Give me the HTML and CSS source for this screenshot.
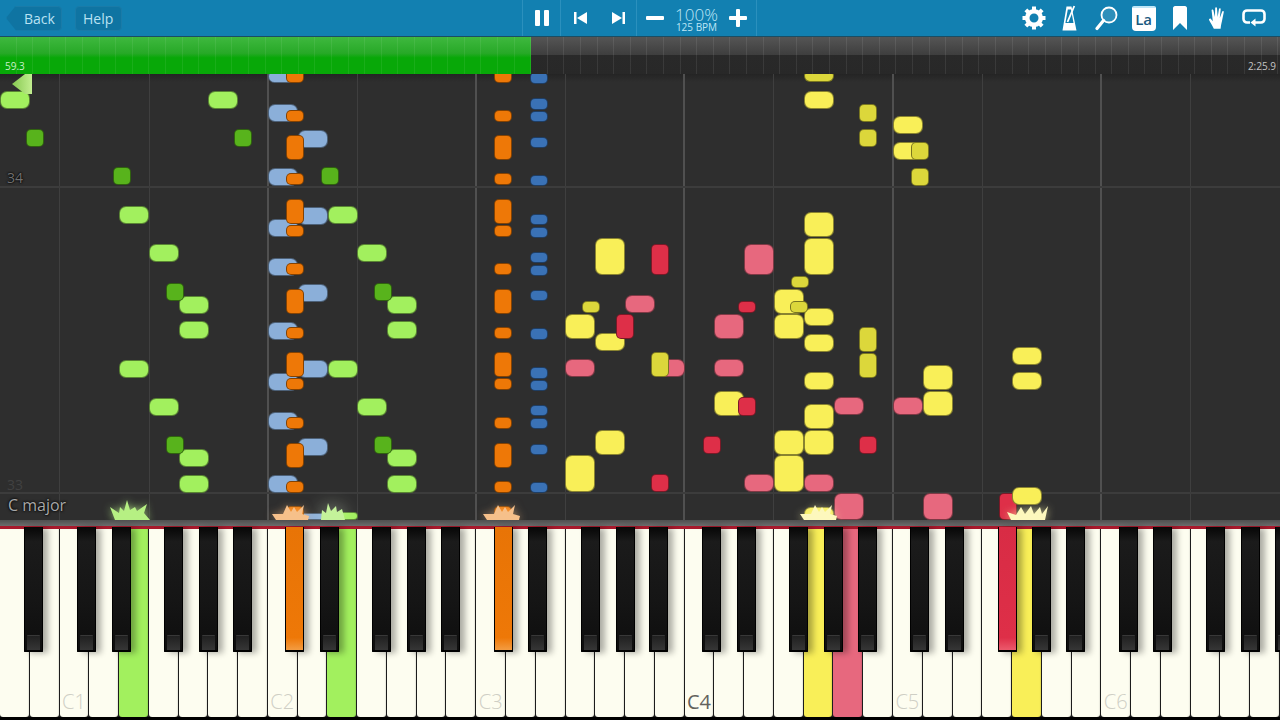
FILE: index.html
```html
<!DOCTYPE html>
<html lang="en">
<head>
    <meta charset="UTF-8">
    <title>Synthesia</title>
    <link rel="stylesheet" href="styles.css">
</head>
<body>
    <header class="topbar">
        <div class="nav">
            <button class="nav-btn back">Back</button>
            <button class="nav-btn">Help</button>
        </div>
        <div class="transport">
            <div class="cell pause-cell">
                <svg class="icon" width="16" height="18" viewBox="0 0 16 18"><rect x="1" y="1" width="5" height="16" rx="1"/><rect x="10" y="1" width="5" height="16" rx="1"/></svg>
            </div>
            <div class="cell skip-cell">
                <svg class="icon" width="14" height="14" viewBox="0 0 14 14"><rect x="0" y="1" width="2.5" height="12"/><path d="M13 1v12L3 7z"/></svg>
                <svg class="icon" width="14" height="14" viewBox="0 0 14 14"><rect x="11.5" y="1" width="2.500" height="12"/><path d="M1 1v12l10-6z"/></svg>
            </div>
            <div class="cell speed-cell">
                <svg class="icon" width="18" height="18" viewBox="0 0 18 18"><rect x="0" y="7" width="18" height="4" rx="1"/></svg>
                <div class="speed">
                    <span class="percent">100%</span>
                    <span class="bpm">125 BPM</span>
                </div>
                <svg class="icon" width="18" height="18" viewBox="0 0 18 18"><rect x="0" y="7" width="18" height="4" rx="1"/><rect x="7" y="0" width="4" height="18" rx="1"/></svg>
            </div>
        </div>
        <div class="tools">
            <div class="tool">
                <svg class="icon" width="24" height="24" viewBox="0 0 24 24">
                    <circle cx="12" cy="12" r="6.800" fill="none" stroke="#fff" stroke-width="4.600"/>
                    <rect x="10" y="0.500" width="4" height="5"/>
                    <rect x="10" y="0.500" width="4" height="5" transform="rotate(45 12 12)"/>
                    <rect x="10" y="0.500" width="4" height="5" transform="rotate(90 12 12)"/>
                    <rect x="10" y="0.500" width="4" height="5" transform="rotate(135 12 12)"/>
                    <rect x="10" y="0.500" width="4" height="5" transform="rotate(180 12 12)"/>
                    <rect x="10" y="0.500" width="4" height="5" transform="rotate(225 12 12)"/>
                    <rect x="10" y="0.500" width="4" height="5" transform="rotate(270 12 12)"/>
                    <rect x="10" y="0.500" width="4" height="5" transform="rotate(315 12 12)"/>
                </svg>
            </div>
            <div class="tool">
                <svg class="icon" width="16" height="26" viewBox="0 0 16 26">
                    <path fill-rule="evenodd" d="M4.500 1.500H9.500L14.500 25.500H.5zM5.800 4.500L3.400 18H11.500L9 4.500z"/>
                    <path d="M5.500 17L12.300 1" fill="none" stroke="#fff" stroke-width="1.800"/>
                </svg>
            </div>
            <div class="tool">
                <svg class="icon" width="23" height="25" viewBox="0 0 23 25">
                    <circle cx="14" cy="9" r="7.500" fill="#fff" fill-opacity="0.12" stroke="#fff" stroke-width="1.800"/>
                    <path d="M8.500 14.500L2 22.500" fill="none" stroke="#fff" stroke-width="3.200" stroke-linecap="round"/>
                </svg>
            </div>
            <div class="tool">
                <div class="lang-btn">La</div>
            </div>
            <div class="tool">
                <svg class="icon" width="14" height="24" viewBox="0 0 14 24"><path d="M2 0h10c1 0 2 1 2 2v22l-7-7-7 7V2C0 1 1 0 2 0z"/></svg>
            </div>
            <div class="tool">
                <svg class="icon" width="18" height="24" viewBox="0 0 20 26"><path d="M6.500 25c-1.500-3-3-5.500-5.200-9.500-.7-1.300 1-2.500 2-1.400l2 2.500L4 4.500c-.1-1.300 1.700-1.500 2-.2l1.700 7.700L8 2c0-1.400 1.900-1.400 2 0l.7 10 1.500-9c.3-1.300 2-1 1.900.3l-1 9.700 2.600-7c.5-1.200 2.100-.6 1.800.7l-2 10c-.4 2-1 3.500-1.500 8.300z"/></svg>
            </div>
            <div class="tool">
                <svg class="icon" width="24" height="20" viewBox="0 0 24 20">
                    <path d="M8 14.500H5a3.500 3.500 0 0 1-3.500-3.500V6A3.500 3.500 0 0 1 5 2.500H19A3.500 3.500 0 0 1 22.500 6V11A3.500 3.500 0 0 1 19 14.500H12" fill="none" stroke="#fff" stroke-width="2.600"/>
                    <path d="M13.500 10.500L8.500 14.500 13.500 18.500z"/>
                </svg>
            </div>
        </div>
    </header>

    <div class="timeline">
        <div class="played"></div>
        <span class="time-left">59.3</span>
        <span class="time-right">2:25.9</span>
    </div>

    <main class="roll" id="roll">
        <span class="measure m34">34</span>
        <span class="measure m33">33</span>
        <span class="key-sig">C major</span>
        <svg class="marker" width="22" height="21" viewBox="0 0 22 21">
            <defs>
                <linearGradient id="marker-fill" x1="0" x2="1" y1="0" y2="0">
                    <stop offset="0" stop-color="#86c850"/>
                    <stop offset="1" stop-color="#c2ee90"/>
                </linearGradient>
            </defs>
            <path d="M1 10L14 0h7v20h-7z" fill="url(#marker-fill)"/>
        </svg>
    </main>

    <div class="divider"></div>
    <div class="keyboard" id="keyboard"></div>

    <script src="script.js"></script>
</body>
</html>
```

FILE: styles.css
```css
* {
    box-sizing: border-box;
}

html, body {
    margin: 0;
    height: 720px;
    overflow: hidden;
}

body {
    display: flex;
    flex-direction: column;
    width: 1280px;
    background: #000;
    font-family: "Open Sans", "Noto Sans", sans-serif;
}

/* top bar */
.topbar {
    display: flex;
    align-items: center;
    height: 36px;
    flex: none;
    background: #1280b1;
}

.icon {
    fill: #fff;
    display: block;
    flex: none;
}

.nav {
    display: flex;
    gap: 13px;
    padding-left: 6px;
    width: 522px;
}

.nav-btn {
    height: 25px;
    padding: 0 8px 0 7px;
    border: 1px solid #1a7ba8;
    border-radius: 4px;
    background: #0f74a2;
    color: #b9e2f3;
    font-family: inherit;
    font-size: 14px;
}

.back {
    width: 56px;
    padding-left: 17px;
    padding-right: 0;
    text-align: left;
    clip-path: polygon(10px 0, 100% 0, 100% 100%, 10px 100%, 0 50%);
}

.transport {
    display: flex;
    height: 36px;
}

.cell {
    display: flex;
    align-items: center;
    border-left: 1px solid #2b90bd;
}

.pause-cell {
    width: 38px;
    justify-content: center;
}

.skip-cell {
    width: 76px;
    padding: 0 11px 0 13px;
    justify-content: space-between;
}

.speed-cell {
    width: 121px;
    padding: 0 9px;
    justify-content: space-between;
    border-right: 1px solid #2b90bd;
}

.speed {
    display: flex;
    flex-direction: column;
    align-items: center;
    color: #bfe6f6;
    margin-top: 2px;
}

.percent {
    font-size: 17px;
    font-weight: 300;
    line-height: 15px;
}

.bpm {
    font-size: 10px;
    line-height: 10px;
}

.tools {
    display: flex;
    align-items: center;
    margin-left: auto;
    padding-right: 8px;
}

.tool {
    display: flex;
    justify-content: center;
    align-items: center;
    width: 36.7px;
    height: 36px;
}

.lang-btn {
    width: 24px;
    height: 25px;
    border-top: 2px solid #bfe6f6;
    border-radius: 2px 2px 4px 4px;
    background: #fff;
    color: #1a5a80;
    font-size: 15px;
    font-weight: 600;
    line-height: 23px;
    text-align: center;
}

/* timeline */
.timeline {
    position: relative;
    height: 38px;
    flex: none;
    border-top: 1px solid #1b4d63;
    background:
        repeating-linear-gradient(90deg, transparent 0 15.6px, rgba(255, 255, 255, 0.08) 15.6px 16.6px),
        linear-gradient(#555 0, #3e3e3e 48%, #292929 50%, #282828 100%);
    overflow: hidden;
}

.played {
    width: 531px;
    height: 100%;
    background:
        repeating-linear-gradient(90deg, transparent 0 15.6px, rgba(255, 255, 255, 0.07) 15.6px 16.6px),
        linear-gradient(#3fb83f 0, #27a927 44%, #08a808 56%, #08a808 100%);
}

.time-left, .time-right {
    position: absolute;
    bottom: 2px;
    font-size: 10px;
    line-height: 12px;
}

.time-left {
    left: 5px;
    color: #c9f0c9;
}

.time-right {
    right: 4px;
    color: #c4c4c4;
}

/* falling notes */
.roll {
    position: relative;
    height: 446px;
    flex: none;
    background: linear-gradient(#242424 0, #2e2e2e 8px);
    overflow: hidden;
}

.grid-v {
    position: absolute;
    top: 0;
    bottom: 0;
    width: 1px;
    background: #3f3f3f;
}

.grid-v.octave {
    width: 2px;
    background: #505050;
}

.grid-h {
    position: absolute;
    left: 0;
    right: 0;
    height: 2px;
    background: #3c3c3c;
}

.note {
    position: absolute;
    border: 1px solid rgba(0, 0, 0, 0.45);
    border-radius: 7px;
}

.note.w18 {
    border-radius: 5px;
}

.note.lime { background: #a2f05e; }
.note.grass { background: #58b31c; }
.note.sky { background: #8bafd9; }
.note.orange { background: #ee7807; }
.note.blue { background: #3a72b6; }
.note.yellow { background: #f9ef58; }
.note.mustard { background: #dcd73b; }
.note.pink { background: #e7687e; }
.note.red { background: #de2f48; }

.measure {
    position: absolute;
    left: 7px;
    z-index: 2;
    font-size: 14px;
    line-height: 16px;
    color: #707070;
    text-shadow: 0 0 2px #000, 0 0 2px #000;
}

.m34 { top: 96px; }

.m33 {
    top: 403px;
    color: #414141;
    text-shadow: none;
}

.key-sig {
    position: absolute;
    left: 8px;
    top: 421px;
    z-index: 2;
    font-size: 16px;
    line-height: 20px;
    color: #a8a8a8;
    text-shadow: 0 0 3px #000, 0 0 2px #000;
}

.marker {
    position: absolute;
    left: 11px;
    top: 0;
    z-index: 2;
}

.burst {
    position: absolute;
    bottom: 0;
    z-index: 2;
    width: 48px;
    height: 24px;
    overflow: visible;
}

.burst.green {
    fill: #b6f083;
    filter: drop-shadow(0 0 4px rgba(190, 245, 140, 0.75));
}

.burst.green-wide {
    fill: #c4f29a;
    filter: drop-shadow(0 0 9px rgba(235, 250, 220, 0.6));
}

.burst.peach {
    fill: #f6c08a;
    filter: drop-shadow(0 0 4px rgba(250, 190, 130, 0.6));
}

.burst.cream {
    fill: #fdf8bd;
    filter: drop-shadow(0 0 4px rgba(250, 245, 170, 0.7));
}

/* keyboard */
.divider {
    height: 9px;
    flex: none;
    border-bottom: 3px solid #a8192c;
    background: linear-gradient(#4f4f4f, #6c6c6c);
}

.keyboard {
    position: relative;
    display: flex;
    height: 188px;
    flex: none;
    background: #1c1c1c;
}

.key {
    position: relative;
    flex: 1;
    margin-right: 1px;
    border-radius: 0 0 3px 3px;
    background: #fdfdf0;
    box-shadow: inset -1px 0 1px rgba(0, 0, 0, 0.08);
}

.key.lime { background: #a2f05e; }
.key.yellow { background: #f9ef58; }
.key.pink { background: #e7687e; }

.key-label {
    position: absolute;
    left: 0;
    right: 0;
    bottom: 3px;
    text-align: center;
    font-size: 20px;
    font-weight: 300;
    line-height: 24px;
    color: #cfcfc5;
}

.key-label.middle {
    color: #62625c;
    font-weight: 400;
}

.black-key {
    position: absolute;
    top: -2px;
    height: 125px;
    width: 19px;
    border: 1px solid #000;
    border-top: 0;
    border-bottom-width: 2px;
    border-radius: 0 0 1px 1px;
    background: linear-gradient(#060606 0, #1b1b1b 12%, #151515 60%, #0e0e0e 100%);
    box-shadow: 5px 1px 6px rgba(0, 0, 0, 0.32);
}

.black-key::after {
    content: "";
    position: absolute;
    left: 2px;
    right: 2px;
    bottom: 0;
    height: 14px;
    border-top: 1px solid #383838;
    border-radius: 1px 1px 0 0;
    background: linear-gradient(#202020, #363636);
}

.black-key.orange {
    background: linear-gradient(#e87406 0, #ee7807 90%, #f39c42 100%);
}

.black-key.red {
    background: linear-gradient(#d82c45 0, #de2f48 90%, #ec5a6c 100%);
}

.black-key.orange::after, .black-key.red::after {
    display: none;
}
```

FILE: script.js
```js
const roll = document.getElementById('roll');
const keyboard = document.getElementById('keyboard');
const ROLL_TOP = 74;

// grid lines, x positions on the page
[59, 149, 357, 565, 773, 982, 1190].forEach(x => addGrid('grid-v', x));
[267, 475, 683, 892, 1100].forEach(x => addGrid('grid-v octave', x));

function addGrid(cls, x) {
    const line = document.createElement('div');
    line.className = cls;
    line.style.left = x + 'px';
    roll.appendChild(line);
}

[186, 492].forEach(y => {
    const line = document.createElement('div');
    line.className = 'grid-h';
    line.style.top = (y - ROLL_TOP) + 'px';
    roll.appendChild(line);
});

// x, y, width, height. drawn in this order
const notes = [
    ['sky', [[268,70,30,13],[268,104,30,18],[298,130,30,18],[268,168,30,18],[298,207,30,18],[268,219,30,18],
        [268,258,30,18],[298,284,30,18],[268,322,30,18],[298,360,30,18],[268,373,30,18],[268,412,30,18],
        [298,438,30,18],[268,475,30,18],[298,513,30,7]]],
    ['lime', [[0,91,30,18],[208,91,30,18],[119,206,30,18],[328,206,30,18],[149,244,30,18],[357,244,30,18],
        [179,296,30,18],[387,296,30,18],[179,321,30,18],[387,321,30,18],[119,360,30,18],[328,360,30,18],
        [149,398,30,18],[357,398,30,18],[179,449,30,18],[387,449,30,18],[179,475,30,18],[387,475,30,18],
        [328,512,30,8]]],
    ['grass', [[26,129,18,18],[234,129,18,18],[113,167,18,18],[321,167,18,18],[166,283,18,18],[374,283,18,18],
        [166,436,18,18],[374,436,18,18]]],
    ['orange', [[286,70,18,13],[286,110,18,12],[286,135,18,25],[286,173,18,12],[286,199,18,25],[286,225,18,12],
        [286,263,18,12],[286,289,18,25],[286,327,18,12],[286,352,18,25],[286,378,18,12],[286,417,18,12],
        [286,443,18,25],[286,481,18,12],[286,506,18,14],
        [494,70,18,13],[494,110,18,12],[494,135,18,25],[494,173,18,12],[494,199,18,25],[494,225,18,12],
        [494,263,18,12],[494,289,18,25],[494,327,18,12],[494,352,18,25],[494,378,18,12],[494,417,18,12],
        [494,443,18,25],[494,481,18,12],[494,506,18,14]]],
    ['blue', [[530,72,18,12],[530,98,18,12],[530,111,18,11],[530,137,18,11],[530,175,18,11],[530,214,18,11],
        [530,227,18,11],[530,252,18,11],[530,265,18,11],[530,290,18,11],[530,328,18,12],[530,367,18,12],
        [530,380,18,11],[530,405,18,11],[530,418,18,11],[530,444,18,11],[530,482,18,11]]],
    ['pink', [[744,244,30,31],[625,295,30,18],[714,314,30,25],[565,359,30,18],[655,359,30,18],[714,359,30,18],
        [834,397,30,18],[893,397,30,18],[744,474,30,18],[804,474,30,18],[834,493,30,27],[923,493,30,27]]],
    ['yellow', [[804,91,30,18],[893,116,30,18],[893,142,30,18],[804,212,30,25],[595,238,30,37],[804,238,30,37],
        [774,289,30,25],[804,308,30,18],[565,314,30,25],[774,314,30,25],[595,333,30,18],[804,334,30,18],
        [923,365,30,25],[1012,347,30,18],[1012,372,30,18],[804,372,30,18],[714,391,30,25],[923,391,30,25],
        [804,404,30,25],[595,430,30,25],[774,430,30,25],[804,430,30,25],[565,455,30,37],[774,455,30,37],
        [804,507,30,13]]],
    ['mustard', [[804,70,30,12],[859,104,18,18],[859,129,18,18],[911,142,18,18],[911,168,18,18],[791,276,18,12],
        [582,301,18,12],[790,301,18,12],[859,327,18,25],[859,353,18,25],[651,352,18,25]]],
    ['red', [[651,244,18,31],[738,301,18,12],[616,314,18,25],[738,397,18,19],[703,436,18,18],[859,436,18,18],
        [651,474,18,18],[999,493,18,27]]],
    ['yellow', [[1012,487,30,18]]]
];

notes.forEach(([color, list]) => {
    list.forEach(([x, y, w, h]) => {
        const note = document.createElement('div');
        note.className = 'note ' + color + (w < 20 ? ' w18' : '');
        note.style.left = x + 'px';
        note.style.top = (y - ROLL_TOP) + 'px';
        note.style.width = w + 'px';
        note.style.height = h + 'px';
        roll.appendChild(note);
    });
});

// sparks where a note hits the keyboard
const spikes = {
    narrow: 'M9 24L4 11 13 17 14 11 18 15 21 4 24 14 29 11 31 15 41 8 38 17 44 24z',
    tall: 'M12 24L13 14 17 17 19 7 22 15 27 10 28 16 33 13 36 24z',
    flat: 'M8 24L4 18 15 18 19 9 23 16 26 11 29 16 36 9 34 18 41 20 40 24z',
    wide: 'M8 24L4 16 13 19 18 11 22 18 28 10 31 18 37 11 39 18 45 10 42 24z'
};
const bursts = [
    { x: 130, cls: 'green', shape: 'narrow' },
    { x: 292, cls: 'peach', shape: 'flat' },
    { x: 333, cls: 'green-wide', shape: 'tall' },
    { x: 503, cls: 'peach', shape: 'flat' },
    { x: 820, cls: 'cream', shape: 'flat' },
    { x: 1027, cls: 'cream', shape: 'wide' }
];

bursts.forEach(b => {
    const svg = document.createElementNS('http://www.w3.org/2000/svg', 'svg');
    svg.setAttribute('class', 'burst ' + b.cls);
    svg.setAttribute('viewBox', '0 0 48 24');
    svg.style.left = (b.x - 24) + 'px';
    svg.innerHTML = '<path d="' + spikes[b.shape] + '"/>';
    roll.appendChild(svg);
});

// white keys start at A, 43 of them across the window
const whiteNames = ['A', 'B', 'C', 'D', 'E', 'F', 'G'];
const whiteColors = { 4: 'lime', 11: 'lime', 27: 'yellow', 28: 'pink', 34: 'yellow' };
const keyWidth = 1280 / 43;

for (let i = 0; i < 43; i++) {
    const key = document.createElement('div');
    key.className = 'key ' + (whiteColors[i] || '');
    if (whiteNames[i % 7] === 'C') {
        const octave = (i - 2) / 7 + 1;
        const label = document.createElement('span');
        label.className = 'key-label' + (octave === 4 ? ' middle' : '');
        label.textContent = 'C' + octave;
        key.appendChild(label);
    }
    keyboard.appendChild(key);
}

// black key offset from the white key boundary, by the white key on its left
const blackOffsets = { A: 4, C: -3, D: 2, F: -5, G: 0 };
const blackColors = { 9: 'orange', 16: 'orange', 33: 'red' };

for (let i = 0; i < 43; i++) {
    const name = whiteNames[i % 7];
    if (!(name in blackOffsets)) continue;
    const black = document.createElement('div');
    black.className = 'black-key ' + (blackColors[i] || '');
    black.style.left = ((i + 1) * keyWidth + blackOffsets[name] - 9.5) + 'px';
    keyboard.appendChild(black);
}
```
